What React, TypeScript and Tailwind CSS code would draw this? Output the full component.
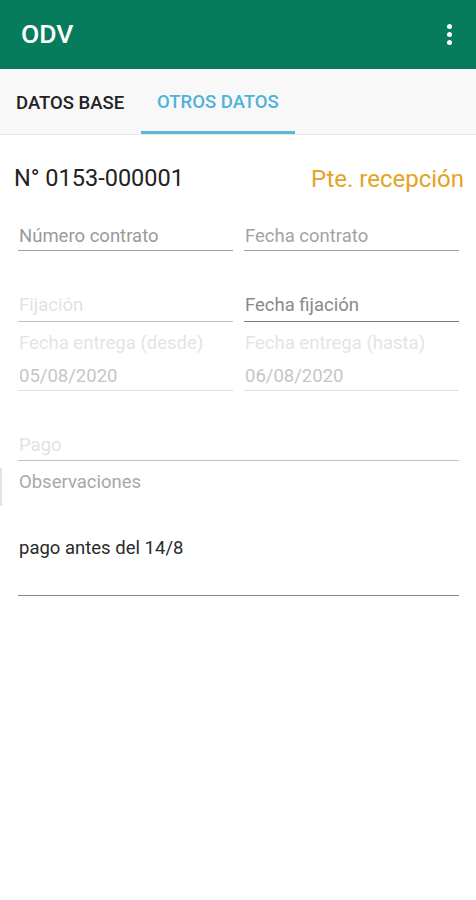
import React from "react";

const font = { fontFamily: "Roboto, 'Noto Sans', sans-serif" };

function Field({
  label,
  labelColor,
  lineColor,
  pb,
}: {
  label: string;
  labelColor: string;
  lineColor: string;
  pb: string;
}) {
  return (
    <div className={`flex-1 border-b ${lineColor} ${pb}`}>
      <p className={`pl-px text-[18.5px] leading-[22px] ${labelColor}`}>{label}</p>
    </div>
  );
}

export default function App() {
  return (
    <div className="w-[476px] h-[900px] bg-white overflow-hidden" style={font}>
      <header className="h-[69px] bg-[#077c5d] flex items-center justify-between pl-[21px] pr-[24px]">
        <h1 className="text-white text-[26.5px] font-medium leading-none">ODV</h1>
        <div className="flex flex-col gap-[3px] items-center">
          <span className="w-[5px] h-[5px] rounded-full bg-white" />
          <span className="w-[5px] h-[5px] rounded-full bg-white" />
          <span className="w-[5px] h-[5px] rounded-full bg-white" />
        </div>
      </header>

      <nav className="h-[66px] bg-[#f8f8f8] border-b border-[#e6e6e6] flex">
        <div className="w-[141px] flex items-center pl-[16px] pt-[4px]">
          <span className="text-[18.5px] font-medium text-[#222]">DATOS BASE</span>
        </div>
        <div className="w-[154px] flex flex-col">
          <div className="flex-1 flex items-center pl-[16px] pt-[6px]">
            <span className="text-[18.5px] font-medium text-[#4fb3d9]">OTROS DATOS</span>
          </div>
          <div className="h-[3px] bg-[#5ab9da]" />
        </div>
      </nav>

      <main className="relative pt-[30px]">
        <div className="flex items-center justify-between pl-[14px] pr-[12px] h-[28px]">
          <span className="text-[23.5px] text-[#222]">N° 0153-000001</span>
          <span className="text-[24px] text-[#e5a324]">Pte. recepción</span>
        </div>

        <div className="pl-[18px] pr-[17px]">
          <div className="flex gap-[11px] mt-[32px]">
            <Field label="Número contrato" labelColor="text-[#9a9a9a]" lineColor="border-[#9e9e9e]" pb="pb-[3px]" />
            <Field label="Fecha contrato" labelColor="text-[#a3a3a3]" lineColor="border-[#9e9e9e]" pb="pb-[3px]" />
          </div>

          <div className="flex gap-[11px] mt-[43px]">
            <Field label="Fijación" labelColor="text-[#e2e2e2]" lineColor="border-[#c2c2c2]" pb="pb-[5px]" />
            <Field label="Fecha fijación" labelColor="text-[#8a8a8a]" lineColor="border-[#7a7a7a]" pb="pb-[5px]" />
          </div>

          <div className="flex gap-[11px] mt-[10px]">
            <div className="flex-1 border-b border-[#e0e0e0] pb-[3px]">
              <p className="pl-px text-[18.5px] leading-[22px] text-[#e4e4e4]">Fecha entrega (desde)</p>
              <p className="pl-px mt-[11px] text-[18.5px] leading-[22px] text-[#c6c6c6]">05/08/2020</p>
            </div>
            <div className="flex-1 border-b border-[#e0e0e0] pb-[3px]">
              <p className="pl-px text-[18.5px] leading-[22px] text-[#e4e4e4]">Fecha entrega (hasta)</p>
              <p className="pl-px mt-[11px] text-[18.5px] leading-[22px] text-[#c6c6c6]">06/08/2020</p>
            </div>
          </div>

          <div className="flex mt-[43px]">
            <Field label="Pago" labelColor="text-[#e2e2e2]" lineColor="border-[#c2c2c2]" pb="pb-[4px]" />
          </div>

          <div className="relative mt-[10px] border-b border-[#8a8a8a] pb-[36px]">
            <span className="absolute -left-[18px] -top-[3px] w-[2px] h-[38px] bg-[#e2e2e2]" />
            <p className="pl-px text-[18.5px] leading-[22px] text-[#a8a8a8]">Observaciones</p>
            <p className="pl-px mt-[44px] text-[18.5px] leading-[22px] text-[#2a2a2a]">pago antes del 14/8</p>
          </div>
        </div>
      </main>
    </div>
  );
}
